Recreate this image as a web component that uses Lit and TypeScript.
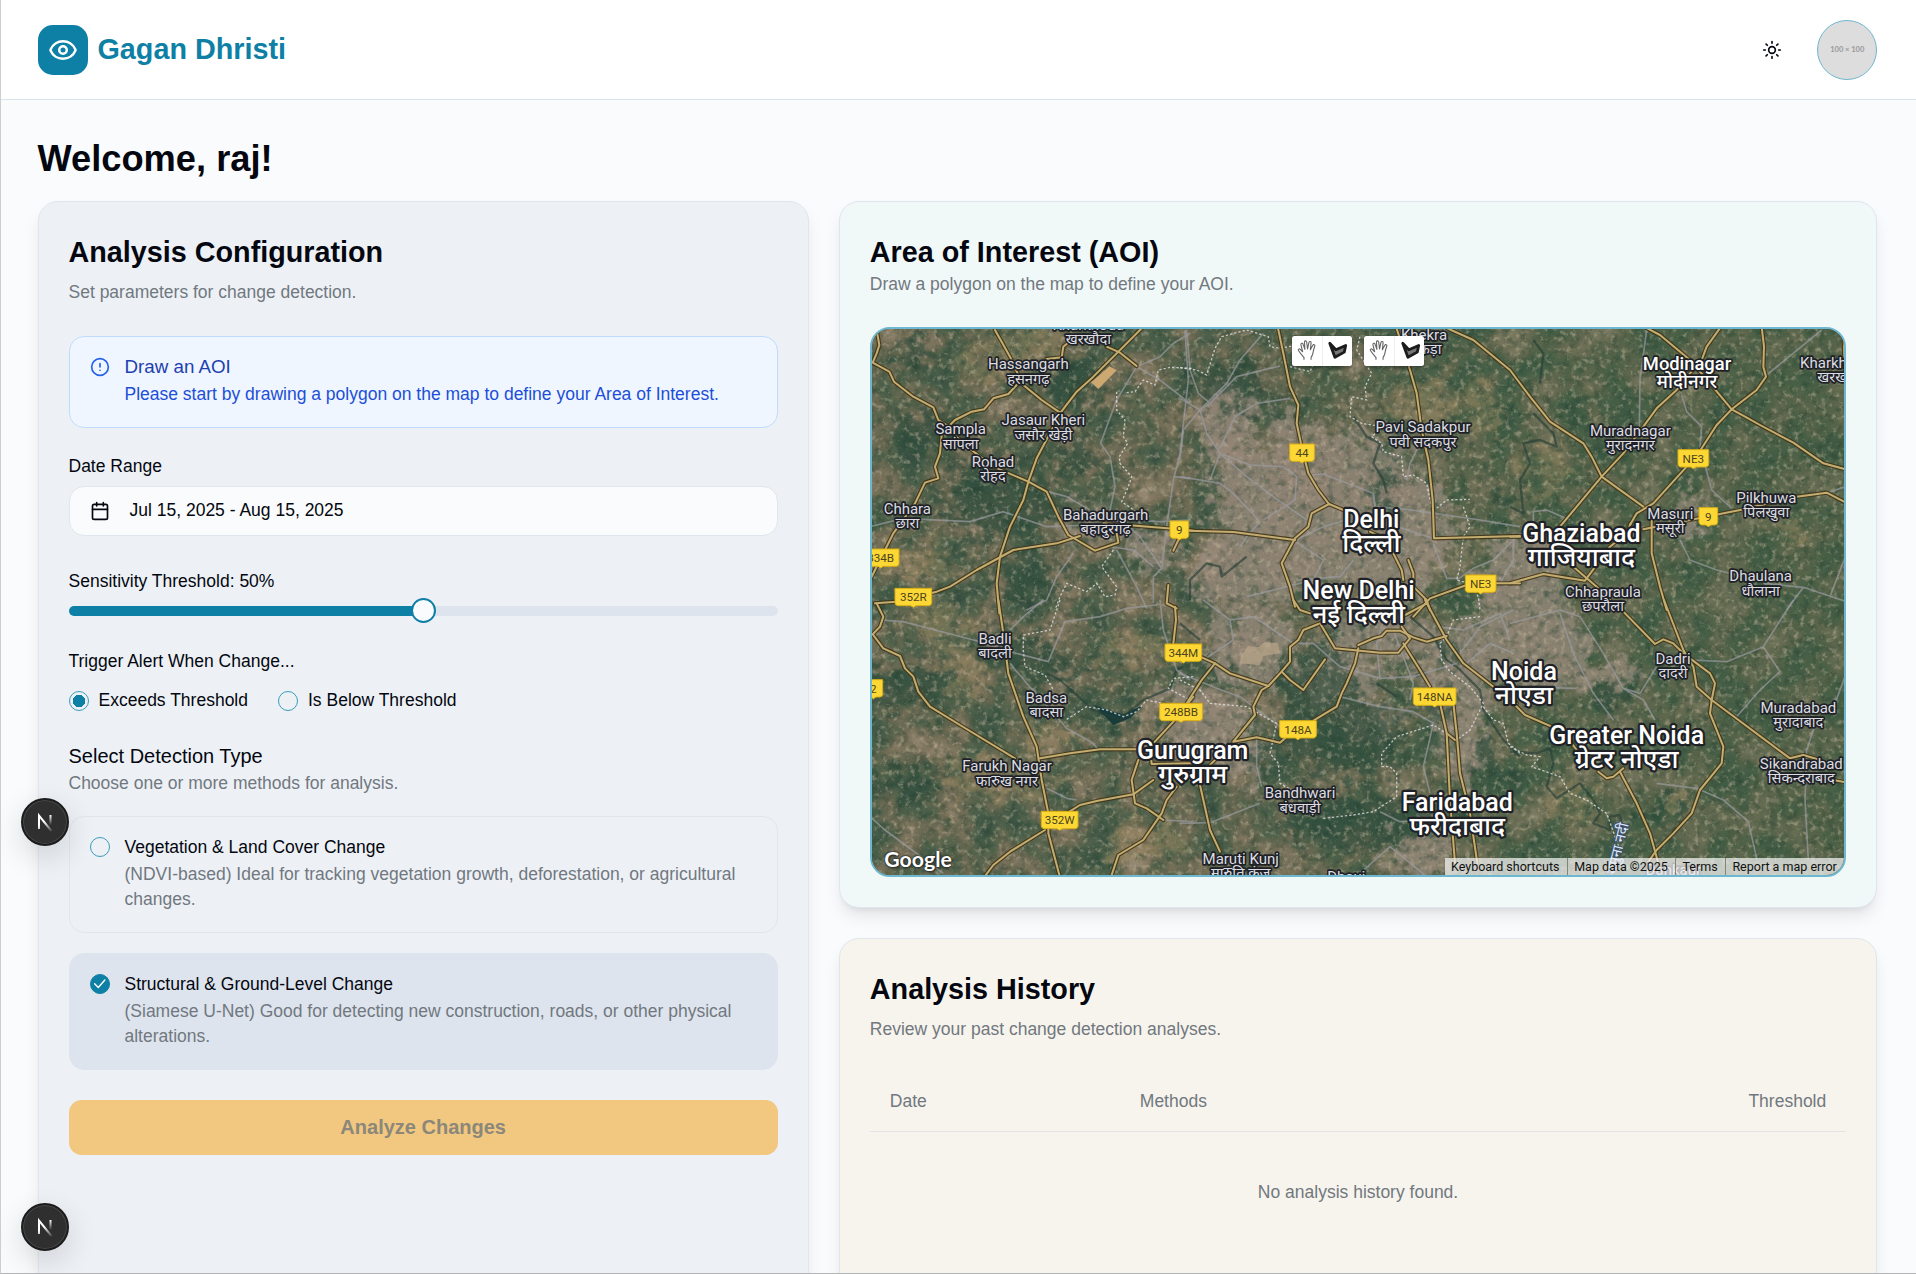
import { LitElement, html, css, svg } from "lit";
import { customElement, state } from "lit/decorators.js";

type Road = string;

/* Map canvas units: three per screen pixel. Each sheet is shifted to its place. */
const sheets: { x: number; y: number; major: Road[]; minor: Road[]; border: Road[]; water: Road[] }[] = [
  {
    x: 0, y: 0,
    major: [
      "48,20 58,75 50,100 38,128 88,155 102,185 160,230 220,262 235,300 265,318",
      "405,30 450,110 475,165 490,195 545,240 600,278",
      "470,195 445,222 400,235 372,268 335,275 285,300 265,320 245,345 240,400 225,440 235,475 195,488 165,550 100,640 60,720 30,780",
      "850,20 770,100 700,170 650,215 600,280 575,330 530,415 505,485 490,540 450,620 420,710 410,790 418,880",
      "560,117 605,112 610,80 640,55", "740,80 780,98 830,138",
      "265,330 345,398 400,440 505,485 560,515 595,590 625,645 705,692 740,680 775,668 770,640",
      "730,610 800,615 960,628 1000,632", "45,850 110,845 230,815 270,800 350,750 460,690 590,670 660,648",
      "960,650 940,692", "925,795 920,850 950,865",
    ],
    minor: [
      "990,40 940,70 900,110 830,140 800,190 770,240 740,320 722,370 750,410 765,500 750,570 840,650 905,745 880,770 880,850",
      "830,140 900,180 990,250", "975,30 985,180 960,400 940,480 920,620 905,745",
      "30,620 130,595 330,605 430,575 560,620 700,615 800,600 900,605 990,600",
      "640,700 590,770 560,840 500,870", "750,680 820,690 880,740", "940,470 990,475", "565,515 620,530 690,570", "770,690 830,800 860,865",
    ],
    border: [
      "995,145 930,142 895,150 885,195 850,180 825,215 800,218", "770,215 770,270 795,300 790,350 803,370 778,410 780,430 815,470 805,500 785,545 850,590",
      "760,690 725,740 770,800 765,825 735,830 710,790 680,815 620,790 600,830 585,870",
    ],
    water: [],
  },
  {
    x: 960, y: 0,
    major: [
      "293,20 310,100 330,200 355,255 350,310 365,380 385,460 415,510 447,552 490,570",
      "447,552 395,580 385,620 345,655 305,730 330,800 345,860", "25,632 160,636 345,660",
      "648,20 690,150 710,220 725,330 745,420 758,540 762,655 1020,648",
      "800,24 880,60 990,150 1050,230 1110,305 1210,370 1235,410 1265,470 1390,560",
      "570,635 600,650 640,700 665,750 670,780", "685,720 700,760 700,800 740,840 750,870",
      "700,890 750,835 860,795", "945,790 1020,790",
    ],
    minor: [
      "20,30 30,150 55,220 90,250 60,270", "0,235 60,270 10,330 0,420", "250,40 180,120 140,190 60,270", "90,250 170,170 300,138",
      "60,270 80,340 120,400 90,480", "120,385 165,290 230,250 330,235", "120,400 210,435 310,440 350,470 345,540 250,600",
      "0,470 120,490 160,520 240,605 200,650 180,680", "120,400 200,470 280,530 380,600", "390,465 430,462 580,520 585,560 680,568 900,600 1020,620",
      "580,520 590,600 760,655", "680,480 690,430 720,370", "345,660 430,620 500,600", "340,660 430,720 400,780 200,830",
      "520,720 480,770 350,780", "760,670 800,775 830,775", "1020,640 940,720 880,745 830,780", "1000,640 1000,720 960,790",
    ],
    border: [
      "0,143 50,150 80,165 105,85 125,50 200,30 265,50 270,80 300,85 380,70", "330,140 390,155 400,130", "540,50 530,90 575,160 555,200 560,240 515,230 510,290 545,310 610,320 575,350 605,370 610,395 665,410 670,470 700,465 740,490 755,560",
      "770,565 800,540 870,538", "850,560 870,620 850,650 840,740 830,780 870,790 895,830 900,870",
    ],
    water: ["520,290 560,350 600,370 580,430 610,480 620,520", "30,840 30,780 80,730 120,740 125,770 200,710"],
  },
  {
    x: 1950, y: 0,
    major: [
      "0,790 100,762 225,782 300,680 350,640 362,610", "0,650 30,650",
      "633,20 590,80 575,120 540,160 500,210 440,265 400,320 340,400 275,470 150,620",
      "410,24 450,45 540,120 600,190 665,268 705,290 750,315 850,368 940,430 1015,450",
      "755,20 762,80 760,140 768,170 740,210 665,268 620,315 575,385 530,440 430,550 380,580 360,615",
      "400,628 540,600 690,570 860,530 950,518 1015,552",
      "425,590 425,700 450,800 470,870", "190,740 260,800 300,840", "1000,20 1003,110",
    ],
    minor: [
      "410,30 390,180 388,320", "935,30 770,165", "515,225 530,275 575,320 570,380 605,510 665,565", "1010,500 960,515",
      "510,660 540,720 620,750 700,770", "760,790 880,802 1010,845", "880,802 830,870", "1010,700 960,830", "70,650 70,575 110,570 180,600",
    ],
    border: [],
    water: ["90,190 100,100 70,60", "0,560 40,580 30,480 60,430 40,370 90,360 140,380 130,340 70,280"],
  },
  {
    x: 0, y: 840,
    major: [
      "415,0 430,100 445,220 490,350 530,440 545,540 565,640 565,700 602,840", "50,10 70,50 60,80 38,103 70,145 120,168 135,205 160,230 175,275 210,320 300,375 465,475",
      "945,20 948,60 940,130", "540,475 630,460 720,448 830,448", "880,430 940,365 1000,290", "870,450 875,492 1000,490",
      "835,480 815,540 825,610 860,625 910,660", "880,540 820,583 710,603 660,615 620,640", "555,690 450,755 400,795 370,835",
      "950,560 920,600 905,640 850,720 775,765 750,840",
    ],
    minor: [
      "60,60 130,65 340,120 470,160 565,185 615,65 720,50 800,25 890,15", "450,90 490,50 550,0", "450,190 500,250 590,350 620,385 700,430 715,450",
      "560,565 620,595 650,600", "30,650 75,690 250,820", "900,0 910,90 950,210 990,240", "910,660 1000,665",
    ],
    border: ["600,0 570,90 490,105 490,150 495,200 555,225 580,270", "620,358 680,320 740,330 790,350 830,335 860,300 930,315", "1000,230 940,235 925,265 990,300"],
    water: ["560,220 600,240 700,330 780,360 850,300 930,265 950,210 970,200"],
  },
  {
    x: 960, y: 840,
    major: [
      "340,0 360,30 390,40", "65,172 105,190 150,220 265,258 305,215 330,185 330,140 355,120 370,90 415,72", "105,190 65,240 20,310",
      "265,258 245,270 220,320 225,345 160,425 230,412 300,428 320,410", "400,362 470,320 485,280 500,250 525,190 535,145",
      "305,215 330,240 370,270 435,178", "420,70 465,145 600,158 655,158 690,115 665,80", "535,135 580,115 605,108 620,92 660,92 700,112 740,125 800,108",
      "670,48 740,10", "735,0 800,120 850,190 940,260 1010,310", "670,130 720,210 750,260", "780,310 800,400 810,600 825,790", "820,310 830,400 840,520 870,640 892,790",
      "800,400 825,420", "60,555 90,690 120,755", "85,500 110,475",
    ],
    minor: [
      "70,0 150,60 220,50 340,130 400,130 480,200 600,235 700,230 830,190", "480,290 600,320 700,335 760,370 730,500 750,580", "600,235 590,130 620,30",
      "230,412 230,500 245,560", "600,635 660,665 780,660", "540,820 630,740 740,830", "0,670 90,668 240,610", "840,160 900,80 1000,30", "860,190 930,130 1000,160",
      "770,80 850,90 960,40 990,120", "640,90 700,250 690,300", "150,60 160,120 70,180", "0,220 110,265 180,290 300,380",
    ],
    border: [
      "0,240 60,270 90,310 200,320 270,360 290,370 270,460 295,490 300,550 370,590", "430,655 520,645 580,635 650,590 650,520 630,500 605,500 605,460 650,410 760,375 800,400",
      "900,50 820,60 800,110 780,130 785,180 810,215 870,260 910,310 870,390 830,420", "910,320 940,360 970,370 985,430 1020,460",
    ],
    water: ["690,50 760,110 800,180 830,200 900,270 910,330 970,420 1020,470", "0,70 60,120", "590,250 650,290"],
  },
  {
    x: 1950, y: 840,
    major: [
      "462,0 520,150 550,200 560,260 605,300", "340,35 435,132 460,118 490,130 520,160 600,220 615,250 605,300 600,340 640,440 635,490 570,570 545,640 490,700 440,750 415,785",
      "605,300 840,475 880,465 930,480", "970,540 1015,548", "10,310 45,345 125,380", "185,430 200,450", "265,515 290,535 310,530 340,505", "330,515 380,610 420,700 445,790",
    ],
    minor: [
      "0,70 150,30 210,50 280,160 340,265 400,300 435,360", "150,40 190,160 250,280 310,360", "540,180 650,185 760,140 850,0", "760,140 810,215 750,270 680,350",
      "340,265 390,280 440,200", "440,550 560,565 640,600 715,665 740,775", "1005,230 975,310", "920,360 890,450 885,600 895,780", "0,260 200,265",
    ],
    border: ["0,440 50,465 90,470 65,500 150,530 180,580 230,600 290,640 330,750"],
    water: ["0,455 80,460 120,445 130,490 110,560 140,595 210,550 250,600 270,640 250,670 300,690 300,650 330,645 340,690"],
  },
];

/* Built-up areas, dark woods and bare ground: cx, cy, rx, ry */
const towns = [
  [1290, 560, 250, 190], [1450, 460, 190, 130], [1660, 640, 110, 210], [1270, 720, 170, 120], [1520, 700, 160, 110], [1180, 980, 130, 130],
  [1100, 330, 90, 130], [1050, 1230, 130, 110], [1560, 1200, 70, 50], [1560, 960, 200, 90], [1800, 1100, 110, 140], [1980, 800, 140, 130], [1880, 980, 120, 90],
  [1690, 1600, 90, 100], [2060, 1000, 130, 130], [1340, 440, 70, 60], [700, 610, 90, 50], [1280, 360, 50, 80], [2240, 1060, 90, 40], [2500, 590, 50, 60],
  [1110, 760, 120, 90], [1560, 400, 60, 50], [1980, 680, 80, 60], [880, 690, 80, 60], [1150, 1330, 90, 60], [1430, 1080, 130, 70], [960, 1140, 70, 60], [1800, 1300, 70, 90],
];
const woods = [
  [1380, 1100, 120, 60], [1450, 1250, 190, 110], [1500, 1500, 230, 90], [750, 1180, 70, 30], [450, 1000, 120, 50], [130, 1110, 130, 60], [1740, 1160, 40, 60],
  [2250, 1120, 50, 40], [1220, 1330, 50, 50], [420, 560, 180, 90], [650, 200, 80, 80], [1560, 520, 40, 70], [1390, 990, 60, 60], [1880, 1330, 50, 60], [2400, 1480, 50, 50],
  [100, 1390, 160, 40], [1750, 1010, 50, 40], [600, 1060, 130, 30], [1100, 190, 120, 60], [500, 770, 120, 50], [1920, 540, 40, 30],
  [200, 330, 110, 60], [180, 100, 70, 50], [620, 400, 70, 60], [360, 440, 80, 40],
];
const fields = [
  [330, 1040, 80, 80], [520, 70, 120, 50], [230, 900, 90, 60], [1860, 270, 60, 70], [2060, 440, 80, 60], [710, 210, 50, 25], [180, 730, 100, 60], [2150, 1440, 60, 70],
  [2470, 1450, 40, 30], [560, 1260, 90, 40], [380, 140, 90, 40], [1690, 250, 80, 80], [2800, 640, 50, 40], [840, 980, 120, 40], [420, 1380, 180, 60], [850, 1560, 120, 60],
];

/* name, local name, x, y of the Latin baseline, size class */
const places: [string, string, number, number, string][] = [
  ["Kharkhoda", "खरखौदा", 685, 30, "s"], ["Hassangarh", "हसनगढ़", 505, 148, "s"], ["Jasaur Kheri", "जसौर खेड़ी", 550, 316, "s"],
  ["Sampla", "सांपला", 302, 343, "s"], ["Rohad", "रोहद", 399, 440, "s"], ["Chhara", "छारा", 142, 581, "s"], ["Bahadurgarh", "बहादुरगढ़", 737, 599, "s"],
  ["Khekra", "खेकड़ा", 1692, 60, "s"], ["Pavi Sadakpur", "पवी सदकपुर", 1689, 337, "s"], ["Delhi", "दिल्ली", 1534, 625, "l"], ["New Delhi", "नई दिल्ली", 1496, 836, "l"],
  ["Modinagar", "मोदीनगर", 2481, 151, "m"], ["Kharkhauda", "खरखौदा", 2940, 143, "s"], ["Muradnagar", "मुरादनगर", 2311, 348, "s"], ["Pilkhuwa", "पिलखुवा", 2719, 548, "s"],
  ["Masuri", "मसूरी", 2431, 596, "s"], ["Ghaziabad", "गाजियाबाद", 2164, 666, "l"], ["Dhaulana", "धौलाना", 2702, 784, "s"], ["Chhapraula", "छपरौला", 2229, 831, "s"],
  ["Badli", "बादली", 405, 971, "s"], ["Badsa", "बादसा", 559, 1148, "s"], ["Farukh Nagar", "फारुख नगर", 441, 1354, "s"], ["Gurugram", "गुरुग्राम", 998, 1317, "l"],
  ["Bandhwari", "बंधवाड़ी", 1320, 1435, "s"], ["Maruti Kunj", "मारुति कुंज", 1142, 1631, "s"], ["Dhauj", "धौज", 1459, 1686, "s"], ["Faridabad", "फरीदाबाद", 1792, 1474, "l"],
  ["Noida", "नोएडा", 1992, 1080, "l"], ["Dadri", "दादरी", 2439, 1031, "s"], ["Greater Noida", "ग्रेटर नोएडा", 2300, 1272, "l"], ["Muradabad", "मुरादाबाद", 2815, 1178, "s"],
  ["Sikandrabad", "सिकन्दराबाद", 2824, 1346, "s"], ["Dankaur", "दनकौर", 2440, 1664, "s"],
];

const shields: [string, number, number][] = [
  ["334B", 62, 713], ["352R", 160, 831], ["9", 958, 629], ["44", 1326, 398], ["NE3", 1862, 791], ["NE3", 2500, 415], ["9", 2545, 589],
  ["2", 40, 1105], ["344M", 970, 998], ["248BB", 963, 1176], ["352W", 599, 1500], ["148A", 1314, 1228], ["148NA", 1724, 1130],
];

@customElement("aoi-map")
export class AoiMap extends LitElement {
  static styles = css`
    :host { display: block; }
    svg { display: block; }
    .map { position: relative; box-sizing: border-box; height: 440px; overflow: hidden; border: 2px solid #6eb7d0; border-radius: 16px; background: #4c5a42; }
    .canvas { width: 100%; height: 100%; }
    .minor { fill: none; stroke: #9a9ba0; stroke-width: 5; opacity: .7; stroke-linejoin: round; }
    .water { fill: none; stroke: #263f38; stroke-width: 7; opacity: .65; stroke-linejoin: round; }
    .border { fill: none; stroke: #e8e8e8; stroke-width: 4; stroke-dasharray: 7 6; opacity: .75; }
    .casing { fill: none; stroke: #3f3317; stroke-width: 13; opacity: .85; stroke-linejoin: round; stroke-linecap: round; }
    .road { fill: none; stroke: #c4ad70; stroke-width: 6; stroke-linejoin: round; stroke-linecap: round; }
    .name { font-family: Roboto, "Noto Sans", sans-serif; text-anchor: middle; fill: #fff; stroke: #202126; stroke-width: 10; stroke-linejoin: round; paint-order: stroke; }
    .s { font-size: 45px; fill: #dcdde2; }
    .m { font-size: 55px; font-weight: 500; }
    .l { font-size: 75px; font-weight: 500; stroke-width: 13; }
    .local-s { font-size: 44px; }
    .local-m { font-size: 56px; }
    .local-l { font-size: 78px; }
    .shield { fill: #fdd835; stroke: #d8ae14; stroke-width: 3; }
    .route { font: 400 35px Roboto, sans-serif; text-anchor: middle; fill: #4c4420; }
    .river { font-family: Roboto, "Noto Sans", sans-serif; font-size: 44px; fill: #dbe7fb; stroke: #40506a; stroke-width: 6; paint-order: stroke; }
    .tools { position: absolute; top: 5px; left: 0; right: 0; display: flex; justify-content: center; gap: 10px; }
    .group { display: flex; background: #fff; border-radius: 2px; box-shadow: 0 1px 3px rgba(0, 0, 0, .3); }
    .tool { display: grid; place-items: center; width: 24px; height: 24px; padding: 0; border: 0; background: none; }
    .tool + .tool { border-left: 1px solid #eee; }
    .google { position: absolute; left: 10px; bottom: 0; color: #fff; font: 700 17px/26px Lato, sans-serif; text-decoration: none; text-shadow: 0 0 2px #222, 0 0 1px #222, 1px 1px 2px #333; }
    .legal { position: absolute; right: 0; bottom: 0; display: flex; font: 10px/14px Roboto, sans-serif; color: #111; }
    .legal > * { padding: 0 6px 0 5px; border: 0; background: rgba(245, 245, 245, .72); color: inherit; font: inherit; text-decoration: none; }
    .legal > * + * { border-left: 1px solid #7f8878; }
  `;

  private lines(kind: "major" | "minor" | "border" | "water", cls: string) {
    return sheets.map(
      (s) => svg`<g class=${cls} transform="translate(${s.x} ${s.y})">${s[kind].map((p) => svg`<polyline points=${p} />`)}</g>`,
    );
  }

  private blobs(list: number[][], fill: string, opacity: number) {
    return svg`<g fill=${fill} opacity=${opacity} filter="url(#ragged)">${list.map(
      ([x, y, rx, ry]) => svg`<ellipse cx=${x} cy=${y} rx=${rx} ry=${ry} />`,
    )}</g>`;
  }

  private handIcon() {
    return html`<svg width="18" height="18" viewBox="0 0 24 24" fill="#fff" stroke="#666" stroke-width="1.2" stroke-linejoin="round" aria-hidden="true">
      <path d="M8.500 22v-2.300C6.800 17.600 4 14.600 2.600 12.300c-.7-1.300.9-2.300 2-1.200l2.500 2.500L5.300 6.200c-.4-1.800 1.700-2.300 2.200-.7L9.500 11 9 3.400c-.1-1.800 2.100-1.900 2.400-.2l.9 7.500L13.800 3.700c.4-1.600 2.500-1.200 2.300.4l-.8 7.300 2.600-4.700c.8-1.400 2.700-.6 2.100 1-1.300 3.300-1.500 5-2 7.600-.3 1.700-1 2.900-1.900 4.200V22" />
    </svg>`;
  }

  private polygonIcon() {
    return html`<svg width="18" height="18" viewBox="0 0 24 24" fill="#777" stroke="#1c1c1c" stroke-width="3" stroke-linejoin="round" aria-hidden="true">
      <path d="M4 4.500l6.500 7L21 7l-1.500 7L9.500 19.500z" />
    </svg>`;
  }

  render() {
    const toolGroup = html`<div class="group">
      <button class="tool" aria-label="Stop drawing">${this.handIcon()}</button>
      <button class="tool" aria-label="Draw a shape">${this.polygonIcon()}</button>
    </div>`;
    return html`<div class="map">
      <svg class="canvas" viewBox="36 27 2918 1638" preserveAspectRatio="xMinYMin slice" role="img" aria-label="Satellite map of Delhi">
        <defs>
          <filter id="ground" x="0" y="0" width="100%" height="100%" color-interpolation-filters="sRGB">
            <feTurbulence type="fractalNoise" baseFrequency="0.009" numOctaves="7" seed="8" />
            <feColorMatrix values="1.400 0 0 0 -.2  1.400 0 0 0 -.2  1.400 0 0 0 -.2  0 0 0 0 1" />
            <feComponentTransfer>
              <feFuncR type="table" tableValues=".17 .20 .25 .31 .40 .48 .55 .62" />
              <feFuncG type="table" tableValues=".29 .32 .36 .385 .41 .45 .50 .57" />
              <feFuncB type="table" tableValues=".24 .26 .28 .295 .32 .36 .41 .48" />
            </feComponentTransfer>
          </filter>
          <filter id="grain" x="0" y="0" width="100%" height="100%" color-interpolation-filters="sRGB">
            <feTurbulence type="fractalNoise" baseFrequency="0.06" numOctaves="5" seed="21" />
            <feColorMatrix values="0 0 0 0 .78  0 0 0 0 .73  0 0 0 0 .62  0 3.400 0 0 -1.800" />
          </filter>
          <filter id="shade" x="0" y="0" width="100%" height="100%" color-interpolation-filters="sRGB">
            <feTurbulence type="fractalNoise" baseFrequency="0.04" numOctaves="5" seed="4" />
            <feColorMatrix values="0 0 0 0 .12  0 0 0 0 .23  0 0 0 0 .17  0 2.600 0 0 -1.250" />
          </filter>
          <filter id="ragged" x="-10%" y="-10%" width="120%" height="120%">
            <feTurbulence type="fractalNoise" baseFrequency="0.02" numOctaves="4" seed="3" result="n" />
            <feGaussianBlur in="SourceGraphic" stdDeviation="12" result="b" />
            <feDisplacementMap in="b" in2="n" scale="190" xChannelSelector="R" yChannelSelector="G" />
          </filter>
          <linearGradient id="haze" x1="0" x2="1" y1="0" y2="0">
            <stop offset="0" stop-color="#6c6751" stop-opacity=".2" />
            <stop offset=".35" stop-color="#6c6751" stop-opacity=".24" />
            <stop offset=".62" stop-color="#4c6245" stop-opacity=".35" />
            <stop offset="1" stop-color="#4a6044" stop-opacity=".6" />
          </linearGradient>
        </defs>
        <rect width="3000" height="1700" filter="url(#ground)" />
        <rect width="3000" height="1700" fill="url(#haze)" />
        ${this.blobs(fields, "#a58f66", 0.42)}
        ${this.blobs(towns, "#9a8b7d", 0.76)}
        ${this.blobs(woods, "#2d4d3e", 0.66)}
        <rect width="3000" height="1700" filter="url(#shade)" opacity=".42" />
        <rect width="3000" height="1700" filter="url(#grain)" opacity=".48" />
        <path d="M693 187l55-48 22 12-55 56z" fill="#cda871" />
        <path d="M1142 1008l22-30 30 4 20-16 40 4 6 30-50 8-10 28-60-6z" fill="#b9a78a" opacity=".7" />
        <path d="M700 1155l60 20 30 8 60-28-40 40-50 20z" fill="#183c3c" />
        ${this.lines("water", "water")} ${this.lines("minor", "minor")} ${this.lines("border", "border")}
        ${this.lines("major", "casing")} ${this.lines("major", "road")}
        ${shields.map(([t, x, y]) => {
          const w = 34 + t.length * 18;
          const l = x - w / 2 - 2;
          return svg`<path class="shield" d="M${l} ${y - 26}h${w + 4}v44q0 6-8 8h-${w / 2 - 14}l-8 5l-8-5h-${w / 2 - 14}q-8-2-8-8z" />
            <text class="route" x=${x} y=${y + 13}>${t}</text>`;
        })}
        ${places.map(([en, hi, x, y, size]) => {
          const drop = size === "l" ? 72 : size === "m" ? 54 : 43;
          return svg`<text class="name ${size}" x=${x} y=${y}>${en}</text>
            <text class="name ${size} local-${size}" x=${x} y=${y + drop}>${hi}</text>`;
        })}
        <text class="river" transform="translate(2268 1665) rotate(-76)">यमुना नदी</text>
      </svg>
      <div class="tools">${toolGroup}${toolGroup}</div>
      <a class="google" href="#map">Google</a>
      <div class="legal">
        <button>Keyboard shortcuts</button><span>Map data ©2025</span><a href="#terms">Terms</a><a href="#report">Report a map error</a>
      </div>
    </div>`;
  }
}

@customElement("app-root")
export class AppRoot extends LitElement {
  @state() private threshold = 50;

  static styles = css`
    :host { display: block; --teal: #0e7fa5; --ink: #04070f; --muted: #71787f; --line: #e0e6ed; }
    * { box-sizing: border-box; }
    svg { display: block; }
    h1, h2, h3, p, fieldset, legend { margin: 0; padding: 0; border: 0; font-weight: inherit; font-size: inherit; }
    .frame { position: relative; height: 100vh; overflow: hidden; background: #f9fbfd; }
    .frame::after { content: ""; position: absolute; inset: 0; border-left: 1px solid #cdced0; border-bottom: 1px solid #b4b5b7; pointer-events: none; }
    .page { zoom: 1.25; font: 14px/20px "Liberation Sans", Arial, sans-serif; color: var(--ink); }
    .header { display: flex; justify-content: space-between; align-items: center; height: 80px; padding: 0 31px 0 30px; background: #fff; border-bottom: 1px solid #dbe4ea; }
    .brand { display: flex; align-items: center; gap: 8px; color: var(--teal); font-size: 23px; font-weight: 700; text-decoration: none; }
    .logo { display: grid; place-items: center; width: 40px; height: 40px; border-radius: 12px; background: var(--teal); color: #fff; }
    .actions { display: flex; align-items: center; gap: 16px; }
    .icon-button { display: grid; place-items: center; width: 40px; height: 40px; padding: 0; border: 0; background: none; color: var(--ink); }
    .avatar { display: grid; place-items: center; width: 48px; height: 48px; padding: 0; border: 1px solid #6eb7d0; border-radius: 50%; background: #ddd; color: #999; font: 700 6px Lato, sans-serif; }
    .main { padding: 29px 31px 30px 30px; }
    .welcome { margin-bottom: 16px; font-size: 29px; line-height: 36px; font-weight: 700; }
    .grid { display: grid; grid-template-columns: repeat(7, minmax(0, 1fr)); gap: 24px; }
    .config { grid-column: span 3; }
    .side { grid-column: span 4; display: flex; flex-direction: column; gap: 24px; }
    .card { padding: 24px; border: 1px solid var(--line); border-radius: 16px; box-shadow: 0 8px 14px -3px rgba(0, 0, 0, .1), 0 4px 6px -4px rgba(0, 0, 0, .1); }
    .blue { background: #edf1f6; }
    .mint { background: #f1f8f8; }
    .sand { background: #f7f4ed; min-height: 300px; }
    .title { font-size: 23px; line-height: 32px; font-weight: 700; }
    .muted { color: var(--muted); }
    .head { display: flex; flex-direction: column; gap: 6px; margin-bottom: 24px; }
    .head-tight { gap: 0; }
    .form { display: flex; flex-direction: column; gap: 24px; }
    .alert { display: flex; gap: 12px; padding: 16px; border: 1px solid #bfdbfe; border-radius: 12px; background: #eff6ff; color: #1d4ed8; }
    .config .head { margin-bottom: 25px; }
    .alert-icon { color: #2563eb; }
    .alert-title { margin-bottom: 4px; color: #1e40af; font-size: 15px; line-height: 16px; }
    .label { display: block; line-height: 14px; }
    .field { display: flex; flex-direction: column; gap: 8px; }
    .range { gap: 6px; }
    .date { display: flex; align-items: center; gap: 16px; height: 40px; margin-bottom: 6px; padding: 0 16px; border: 1px solid var(--line); border-radius: 12px; background: #f9fbfc; color: inherit; font: inherit; }
    .slider { appearance: none; display: block; width: 100%; height: 20px; margin: 0; background: none; }
    .slider::-webkit-slider-runnable-track { height: 8px; border-radius: 4px; background: linear-gradient(to right, var(--teal) var(--fill), #dde4ed var(--fill)); }
    .slider::-webkit-slider-thumb { appearance: none; width: 20px; height: 20px; margin-top: -6px; border: 2px solid var(--teal); border-radius: 50%; background: #f9fbfc; }
    .radios { display: flex; gap: 24px; margin-top: 16px; }
    .radio { display: flex; align-items: center; gap: 8px; height: 16px; }
    .dot { appearance: none; flex: none; width: 16px; height: 16px; margin: 0; border: 1px solid #3b9bbb; border-radius: 50%; }
    .dot:checked { background: radial-gradient(circle, var(--teal) 5px, transparent 5px); }
    .section { font-size: 16px; line-height: 24px; }
    .options { display: flex; flex-direction: column; gap: 16px; margin-top: 16px; }
    .option { display: flex; gap: 12px; padding: 16px; border: 1px solid #e1e6ec; border-radius: 12px; }
    .option-on { border-color: #dde4ed; background: #dde4ed; }
    .tick { position: relative; flex: none; width: 16px; height: 16px; }
    .tick .dot { display: block; }
    .tick .dot:checked { background: var(--teal); border-color: var(--teal); }
    .tick svg { position: absolute; inset: 1px; color: #fff; pointer-events: none; }
    .option-name { display: block; margin-bottom: 4px; line-height: 16px; }
    .analyze { height: 44px; border: 0; border-radius: 10px; background: #f2c77f; color: #8b877b; font: 700 16px "Liberation Sans", Arial, sans-serif; }
    .table { width: 100%; border-collapse: collapse; color: var(--muted); }
    .table th { height: 48px; padding: 0 16px; border-bottom: 1px solid #e2e4e6; text-align: left; font-weight: 400; }
    .table .date-col { width: 200px; }
    .table .end { text-align: right; }
    .table td { height: 96px; padding: 0; text-align: center; }
    .dev { position: absolute; left: 21px; display: grid; place-items: center; width: 48px; height: 48px; padding: 0; border: 2px solid #1c1c1c; border-radius: 50%; background: #2f2f2f; box-shadow: inset 0 0 0 1px #4a4a4a, 0 10px 30px rgba(0, 0, 0, .14); }
    .dev-upper { bottom: 428px; }
    .dev-lower { bottom: 23px; }
  `;

  private stroke(size: number, body: unknown, width = 2) {
    return html`<svg width=${size} height=${size} viewBox="0 0 24 24" fill="none" stroke="currentColor" stroke-width=${width} stroke-linecap="round" stroke-linejoin="round" aria-hidden="true">${body}</svg>`;
  }

  private devButton(place: string, id: string) {
    return html`<button class="dev ${place}" aria-label="Open developer tools">
      <svg width="18" height="20" viewBox="0 0 18 20" fill="none" aria-hidden="true">
        <defs>
          <linearGradient id=${id + "a"} gradientUnits="userSpaceOnUse" x1="9" y1="9" x2="16" y2="19"><stop stop-color="#fff" /><stop offset="1" stop-color="#fff" stop-opacity=".1" /></linearGradient>
          <linearGradient id=${id + "b"} gradientUnits="userSpaceOnUse" x1="14" y1="3" x2="14" y2="13"><stop stop-color="#fff" /><stop offset="1" stop-color="#fff" stop-opacity="0" /></linearGradient>
        </defs>
        <path d="M3 17V3.500L15.500 19" stroke="url(#${id}a)" stroke-width="2" />
        <path d="M14.500 3v11" stroke="url(#${id}b)" stroke-width="2" />
      </svg>
    </button>`;
  }

  private option(id: string, name: string, text: string, on: boolean) {
    return html`<div class="option ${on ? "option-on" : ""}">
      <span class="tick">
        <input class="dot" type="checkbox" id=${id} ?checked=${on} />
        ${on ? this.stroke(14, svg`<path d="M19 7 10 17l-5-5" />`) : ""}
      </span>
      <div>
        <label class="option-name" for=${id}>${name}</label>
        <p class="muted">${text}</p>
      </div>
    </div>`;
  }

  render() {
    return html`<div class="frame">
      <div class="page">
        <header class="header">
          <a class="brand" href="#home">
            <span class="logo">${this.stroke(24, svg`<path d="M2.060 12.350a1 1 0 0 1 0-.7 10.750 10.750 0 0 1 19.880 0 1 1 0 0 1 0 .7 10.750 10.750 0 0 1-19.880 0" /><circle cx="12" cy="12" r="3" />`)}</span>
            Gagan Dhristi
          </a>
          <div class="actions">
            <button class="icon-button" aria-label="Toggle theme">
              ${this.stroke(16, svg`<circle cx="12" cy="12" r="4" /><path d="M12 2v2M12 20v2M4.930 4.930l1.410 1.410M17.660 17.660l1.410 1.410M2 12h2M20 12h2M6.340 17.660l-1.410 1.410M19.070 4.930l-1.410 1.410" />`)}
            </button>
            <button class="avatar">100 × 100</button>
          </div>
        </header>
        <main class="main">
          <h1 class="welcome">Welcome, raj!</h1>
          <div class="grid">
            <section class="card blue config">
              <div class="head">
                <h2 class="title">Analysis Configuration</h2>
                <p class="muted">Set parameters for change detection.</p>
              </div>
              <form class="form" @submit=${(e: Event) => e.preventDefault()}>
                <div class="alert" role="alert">
                  <span class="alert-icon">${this.stroke(16, svg`<circle cx="12" cy="12" r="10" /><path d="M12 8v4M12 16h.01" />`)}</span>
                  <div>
                    <h3 class="alert-title">Draw an AOI</h3>
                    <p>Please start by drawing a polygon on the map to define your Area of Interest.</p>
                  </div>
                </div>
                <div class="field">
                  <label class="label" for="range">Date Range</label>
                  <button class="date" id="range" type="button">
                    ${this.stroke(16, svg`<path d="M8 2v4M16 2v4M3 10h18" /><rect x="3" y="4" width="18" height="18" rx="2" />`)}
                    Jul 15, 2025 - Aug 15, 2025
                  </button>
                </div>
                <div class="field range">
                  <label class="label" for="threshold">Sensitivity Threshold: ${this.threshold}%</label>
                  <input class="slider" id="threshold" type="range" min="0" max="100" .value=${String(this.threshold)}
                    style="--fill: ${this.threshold}%"
                    @input=${(e: Event) => (this.threshold = Number((e.target as HTMLInputElement).value))} />
                </div>
                <fieldset>
                  <legend class="label">Trigger Alert When Change...</legend>
                  <div class="radios">
                    <label class="radio"><input class="dot" type="radio" name="trigger" checked />Exceeds Threshold</label>
                    <label class="radio"><input class="dot" type="radio" name="trigger" />Is Below Threshold</label>
                  </div>
                </fieldset>
                <div>
                  <h3 class="section">Select Detection Type</h3>
                  <p class="muted">Choose one or more methods for analysis.</p>
                  <div class="options">
                    ${this.option("ndvi", "Vegetation & Land Cover Change", "(NDVI-based) Ideal for tracking vegetation growth, deforestation, or agricultural changes.", false)}
                    ${this.option("unet", "Structural & Ground-Level Change", "(Siamese U-Net) Good for detecting new construction, roads, or other physical alterations.", true)}
                  </div>
                </div>
                <button class="analyze" disabled>Analyze Changes</button>
              </form>
            </section>
            <div class="side">
              <section class="card mint">
                <div class="head head-tight">
                  <h2 class="title">Area of Interest (AOI)</h2>
                  <p class="muted">Draw a polygon on the map to define your AOI.</p>
                </div>
                <aoi-map></aoi-map>
              </section>
              <section class="card sand">
                <div class="head">
                  <h2 class="title">Analysis History</h2>
                  <p class="muted">Review your past change detection analyses.</p>
                </div>
                <table class="table">
                  <thead><tr><th class="date-col">Date</th><th>Methods</th><th class="end">Threshold</th></tr></thead>
                  <tbody><tr><td colspan="3">No analysis history found.</td></tr></tbody>
                </table>
              </section>
            </div>
          </div>
        </main>
      </div>
      ${this.devButton("dev-upper", "u")} ${this.devButton("dev-lower", "l")}
    </div>`;
  }
}
